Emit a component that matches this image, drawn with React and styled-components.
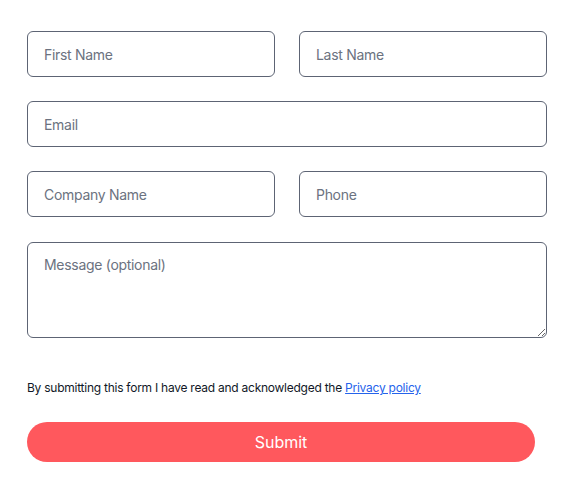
import React from 'react';
import styled, { createGlobalStyle } from 'styled-components';

const GlobalStyle = createGlobalStyle`
  body {
    margin: 0;
    background: #ffffff;
    font-family: Inter, 'Noto Sans', sans-serif;
  }
`;

const Form = styled.form`
  width: 520px;
  padding: 31px 25px 0 27px;
  display: flex;
  flex-direction: column;
`;

const Row = styled.div`
  display: grid;
  grid-template-columns: ${(p) => (p.$split ? '1fr 1fr' : '1fr')};
  column-gap: 24px;
  margin-bottom: ${(p) => p.$gap ?? 24}px;
`;

const Input = styled.input`
  box-sizing: border-box;
  width: 100%;
  height: 46px;
  padding: 0 16px;
  border: 1px solid #5d6474;
  border-radius: 6px;
  font-family: inherit;
  font-size: 14px;
  letter-spacing: -0.3px;
  color: #1f2937;
  outline: none;

  &::placeholder {
    color: #6b7280;
  }
`;

const TextArea = styled.textarea`
  box-sizing: border-box;
  display: block;
  width: 100%;
  height: 96px;
  padding: 13px 16px;
  border: 1px solid #5d6474;
  border-radius: 6px;
  font-family: inherit;
  font-size: 14px;
  letter-spacing: -0.3px;
  color: #1f2937;
  outline: none;
  resize: vertical;

  &::placeholder {
    color: #6b7280;
  }
`;

const Notice = styled.p`
  margin: 42px 0 0;
  font-size: 12px;
  line-height: 15px;
  color: #111827;
  letter-spacing: -0.25px;
`;

const Link = styled.a`
  color: #2563eb;
  text-decoration: underline;
`;

const SubmitButton = styled.button`
  margin-top: 27px;
  width: 508px;
  height: 40px;
  border: none;
  border-radius: 20px;
  background: #ff585d;
  color: #ffffff;
  font-family: inherit;
  font-size: 16px;
  cursor: pointer;
`;

const App = () => {
  return (
    <>
      <GlobalStyle />
      <Form onSubmit={(e) => e.preventDefault()}>
        <Row $split>
          <Input placeholder="First Name" />
          <Input placeholder="Last Name" />
        </Row>
        <Row>
          <Input placeholder="Email" />
        </Row>
        <Row $split $gap={25}>
          <Input placeholder="Company Name" />
          <Input placeholder="Phone" />
        </Row>
        <Row $gap={0}>
          <TextArea placeholder="Message (optional)" />
        </Row>
        <Notice>
          By submitting this form I have read and acknowledged the{' '}
          <Link href="#">Privacy policy</Link>
        </Notice>
        <SubmitButton type="submit">Submit</SubmitButton>
      </Form>
    </>
  );
};

export default App;
